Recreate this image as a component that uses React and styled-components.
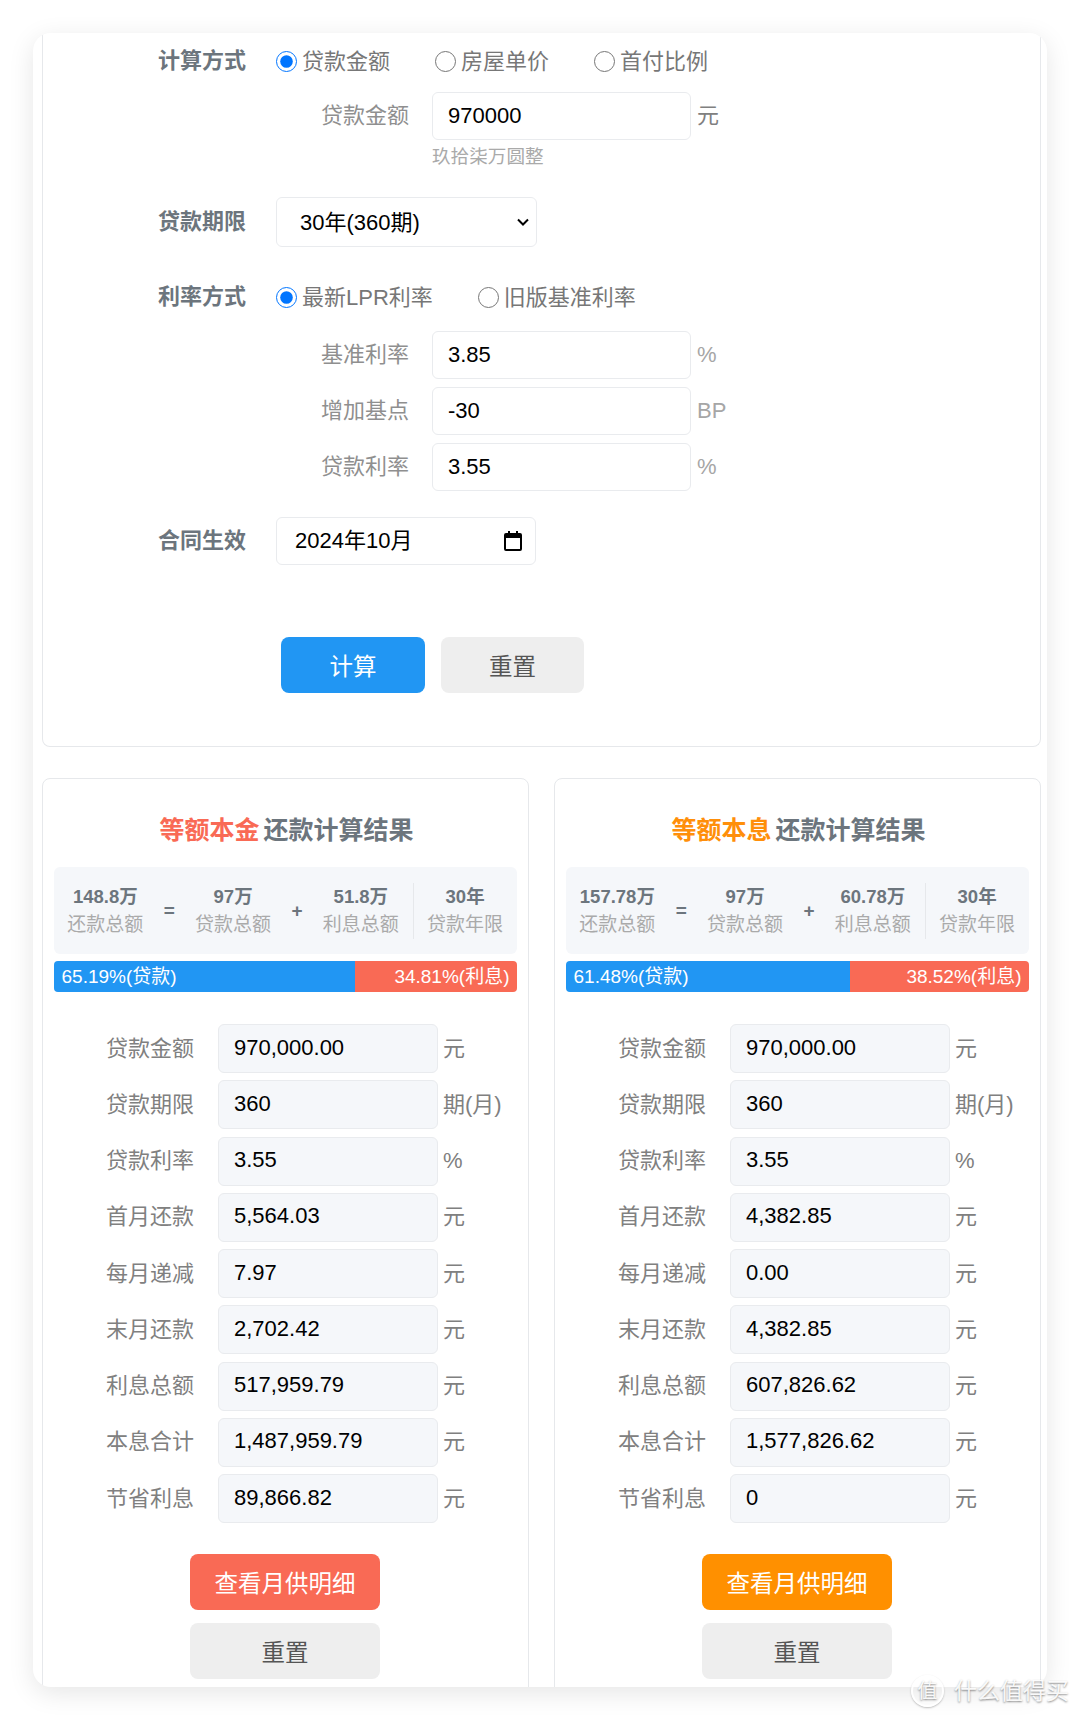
import React from 'react';
import styled, { createGlobalStyle } from 'styled-components';

const FONT = `"Liberation Sans", "Noto Sans CJK SC", sans-serif`;

const CHEVRON = `url("data:image/svg+xml,%3Csvg xmlns='http://www.w3.org/2000/svg' width='14' height='10' viewBox='0 0 14 10'%3E%3Cpath d='M2 2.5l5 5 5-5' fill='none' stroke='%23000' stroke-width='2'/%3E%3C/svg%3E")`;

const RESULTS = [
    {
        name: '等额本金',
        accent: '#f96a55',
        button: '#f96a55',
        total: '148.8万',
        interest: '51.8万',
        loanPct: 65.19,
        loanText: '65.19%(贷款)',
        rateText: '34.81%(利息)',
        rows: [
            ['贷款金额', '970,000.00', '元'],
            ['贷款期限', '360', '期(月)'],
            ['贷款利率', '3.55', '%'],
            ['首月还款', '5,564.03', '元'],
            ['每月递减', '7.97', '元'],
            ['末月还款', '2,702.42', '元'],
            ['利息总额', '517,959.79', '元'],
            ['本息合计', '1,487,959.79', '元'],
            ['节省利息', '89,866.82', '元'],
        ],
    },
    {
        name: '等额本息',
        accent: '#ff8f0a',
        button: '#ff9000',
        total: '157.78万',
        interest: '60.78万',
        loanPct: 61.48,
        loanText: '61.48%(贷款)',
        rateText: '38.52%(利息)',
        rows: [
            ['贷款金额', '970,000.00', '元'],
            ['贷款期限', '360', '期(月)'],
            ['贷款利率', '3.55', '%'],
            ['首月还款', '4,382.85', '元'],
            ['每月递减', '0.00', '元'],
            ['末月还款', '4,382.85', '元'],
            ['利息总额', '607,826.62', '元'],
            ['本息合计', '1,577,826.62', '元'],
            ['节省利息', '0', '元'],
        ],
    },
];

function Radio({ name, label, checked }) {
    return (
        <RadioLabel>
            <RadioInput type="radio" name={name} defaultChecked={checked} />
            <RadioText>{label}</RadioText>
        </RadioLabel>
    );
}

function FormField({ label, value, unit, muted }) {
    return (
        <SubRow>
            <SubLabel>{label}</SubLabel>
            <TextField type="text" defaultValue={value} />
            <Unit $muted={muted}>{unit}</Unit>
        </SubRow>
    );
}

function ResultCard({ data }) {
    return (
        <Card>
            <CardTitle>
                <Accent $color={data.accent}>{data.name}</Accent> 还款计算结果
            </CardTitle>
            <Summary>
                <SummaryItem><b>{data.total}</b><span>还款总额</span></SummaryItem>
                <Operator>=</Operator>
                <SummaryItem><b>97万</b><span>贷款总额</span></SummaryItem>
                <Operator>+</Operator>
                <SummaryItem><b>{data.interest}</b><span>利息总额</span></SummaryItem>
                <SummaryItem $divided><b>30年</b><span>贷款年限</span></SummaryItem>
            </Summary>
            <Progress>
                <LoanPart style={{ width: `${data.loanPct}%` }}>{data.loanText}</LoanPart>
                <RatePart>{data.rateText}</RatePart>
            </Progress>
            <ResultRows>
                {data.rows.map(([label, value, unit]) => (
                    <ResultRow key={label}>
                        <ResultLabel>{label}</ResultLabel>
                        <ResultValue type="text" readOnly defaultValue={value} />
                        <ResultUnit>{unit}</ResultUnit>
                    </ResultRow>
                ))}
            </ResultRows>
            <CardButtons>
                <Button $bg={data.button} $fg="#fff" $w="190px">查看月供明细</Button>
                <Button $bg="#eeeeee" $fg="#555" $w="190px">重置</Button>
            </CardButtons>
        </Card>
    );
}

export default function App() {
    return (
        <>
            <GlobalStyle />
            <Frame>
                <TopCard>
                    <MainRow>
                        <MainLabel>计算方式</MainLabel>
                        <Radios>
                            <Radio name="mode" label="贷款金额" checked />
                            <Radio name="mode" label="房屋单价" />
                            <Radio name="mode" label="首付比例" />
                        </Radios>
                    </MainRow>
                    <SubRows $top="15px">
                        <FormField label="贷款金额" value="970000" unit="元" />
                    </SubRows>
                    <Hint>玖拾柒万圆整</Hint>

                    <MainRow $top="29px">
                        <MainLabel>贷款期限</MainLabel>
                        <PeriodSelect defaultValue="360">
                            <option value="360">30年(360期)</option>
                        </PeriodSelect>
                    </MainRow>

                    <MainRow $top="34px">
                        <MainLabel>利率方式</MainLabel>
                        <Radios>
                            <Radio name="rate" label="最新LPR利率" checked />
                            <Radio name="rate" label="旧版基准利率" />
                        </Radios>
                    </MainRow>
                    <SubRows $top="18px">
                        <FormField label="基准利率" value="3.85" unit="%" muted />
                        <FormField label="增加基点" value="-30" unit="BP" muted />
                        <FormField label="贷款利率" value="3.55" unit="%" muted />
                    </SubRows>

                    <MainRow $top="26px">
                        <MainLabel>合同生效</MainLabel>
                        <DateField>
                            2024年10月
                            <svg width="18" height="20" viewBox="0 0 18 20">
                                <path d="M4 0h2v2h6V0h2v2h2a2 2 0 0 1 2 2v14a2 2 0 0 1-2 2H2a2 2 0 0 1-2-2V4a2 2 0 0 1 2-2h2V0zM2 7v11h14V7H2z" fill="#000" />
                            </svg>
                        </DateField>
                    </MainRow>

                    <TopButtons>
                        <Button $bg="#2196f3" $fg="#fff" $w="144px">计算</Button>
                        <Button $bg="#eeeeee" $fg="#555" $w="143px">重置</Button>
                    </TopButtons>
                </TopCard>

                <CardGrid>
                    {RESULTS.map((r) => <ResultCard key={r.name} data={r} />)}
                </CardGrid>
            </Frame>
            <Watermark>
                <WatermarkBadge>值</WatermarkBadge>
                什么值得买
            </Watermark>
        </>
    );
}

const GlobalStyle = createGlobalStyle`
    html, body {
        margin: 0;
        background: #fff;
        font-family: ${FONT};
    }
    body {
        width: 1080px;
        height: 1720px;
        overflow: hidden;
        position: relative;
    }
    * { box-sizing: border-box; }
`;

const Frame = styled.div`
    margin: 33px 0 0 33px;
    width: 1014px;
    height: 1654px;
    padding: 0 6px 0 9px;
    overflow: hidden;
    background: #fff;
    border-radius: 18px;
    box-shadow: 0 6px 26px rgba(0, 0, 0, 0.1);
`;

const TopCard = styled.section`
    border: 1px solid #e6e8eb;
    border-top: 0;
    border-radius: 0 0 8px 8px;
    height: 714px;
    padding: 12px 0 0 115px;
`;

const MainRow = styled.div`
    display: flex;
    align-items: center;
    gap: 30px;
    margin-top: ${(p) => p.$top || '0'};
`;

const MainLabel = styled.div`
    width: 88px;
    font-size: 22px;
    font-weight: 700;
    line-height: 32px;
    color: #6c757d;
`;

const Radios = styled.div`
    display: flex;
    gap: 45px;
`;

const RadioLabel = styled.label`
    display: flex;
    align-items: center;
    gap: 5px;
    font-size: 22px;
    color: #777;
`;

const RadioInput = styled.input`
    width: 21px;
    height: 21px;
    margin: 0;
`;

const RadioText = styled.span`
    padding-top: 2px;
    line-height: 30px;
`;

const SubRows = styled.div`
    display: flex;
    flex-direction: column;
    gap: 8px;
    margin: ${(p) => p.$top} 0 0 118px;
`;

const SubRow = styled.div`
    display: flex;
    align-items: center;
`;

const SubLabel = styled.div`
    width: 133px;
    margin-right: 23px;
    font-size: 22px;
    line-height: 32px;
    text-align: right;
    color: #8f8f8f;
`;

const TextField = styled.input`
    width: 259px;
    height: 48px;
    padding: 0 15px;
    border: 1px solid #e9ebee;
    border-radius: 6px;
    background: #fff;
    font: 22px ${FONT};
    color: #000;
    outline: none;
`;

const Unit = styled.span`
    margin-left: 6px;
    font-size: 22px;
    line-height: 32px;
    color: ${(p) => (p.$muted ? '#a6a6a6' : '#808080')};
`;

const Hint = styled.div`
    margin: 6px 0 0 274px;
    font-size: 18.6px;
    line-height: 22px;
    color: #aaa;
`;

const PeriodSelect = styled.select`
    width: 261px;
    height: 50px;
    padding: 0 23px;
    border: 1px solid #e9ebee;
    border-radius: 6px;
    appearance: none;
    background: #fff ${CHEVRON} no-repeat right 6px center;
    font: 22px ${FONT};
    color: #000;
    outline: none;
`;

const DateField = styled.div`
    display: flex;
    align-items: center;
    justify-content: space-between;
    width: 260px;
    height: 48px;
    padding: 0 13px 0 18px;
    border: 1px solid #e9ebee;
    border-radius: 6px;
    font-size: 22px;
    line-height: 32px;
    color: #000;
`;

const TopButtons = styled.div`
    display: flex;
    gap: 16px;
    margin: 72px 0 0 123px;
`;

const Button = styled.button`
    width: ${(p) => p.$w};
    height: 56px;
    padding: 3px 0 0;
    border: 0;
    border-radius: 8px;
    background: ${(p) => p.$bg};
    color: ${(p) => p.$fg};
    font: 23.5px/32px ${FONT};
`;

const CardGrid = styled.div`
    display: flex;
    gap: 25px;
    margin-top: 31px;
`;

const Card = styled.section`
    flex: 1;
    height: 920px;
    padding: 0 11.5px 0 10.5px;
    border: 1px solid #e6e8eb;
    border-radius: 8px;
`;

const CardTitle = styled.h2`
    margin: 0;
    padding: 35px 0 0 3px;
    height: 88px;
    font-size: 25px;
    font-weight: 700;
    line-height: 32px;
    word-spacing: -3px;
    text-align: center;
    color: #6c757d;
`;

const Accent = styled.span`
    color: ${(p) => p.$color};
`;

const Summary = styled.div`
    display: grid;
    grid-template-columns: 1fr 24px 1fr 24px 1fr 1fr;
    align-items: center;
    height: 87px;
    background: #f5f7fa;
    border-radius: 6px;
`;

const SummaryItem = styled.div`
    display: flex;
    flex-direction: column;
    align-items: center;
    height: 56px;
    justify-content: center;
    border-left: ${(p) => (p.$divided ? '1px solid #e6e8eb' : '0')};
    white-space: nowrap;

    b {
        font-size: 18.5px;
        line-height: 28px;
        color: #6c757d;
    }
    span {
        font-size: 19px;
        line-height: 28px;
        color: #aaa;
    }
`;

const Operator = styled.div`
    font-size: 19px;
    font-weight: 700;
    text-align: center;
    color: #6c757d;
`;

const Progress = styled.div`
    display: flex;
    height: 31px;
    margin-top: 7px;
    border-radius: 4px;
    overflow: hidden;
    font-size: 19px;
    line-height: 31px;
    color: #fff;
`;

const LoanPart = styled.div`
    padding-left: 8px;
    background: #2196f3;
`;

const RatePart = styled.div`
    flex: 1;
    padding-right: 7px;
    background: #f96a55;
    text-align: right;
`;

const ResultRows = styled.div`
    display: flex;
    flex-direction: column;
    gap: 7.25px;
    margin-top: 32px;
`;

const ResultRow = styled.div`
    display: flex;
    align-items: center;
`;

const ResultLabel = styled.div`
    width: 140.5px;
    margin-right: 24px;
    font-size: 22px;
    line-height: 32px;
    text-align: right;
    color: #808080;
`;

const ResultValue = styled.input`
    width: 220px;
    height: 49px;
    padding: 0 15px 2px;
    border: 1px solid #e9ebee;
    border-radius: 6px;
    background: #f5f7fa;
    font: 22px ${FONT};
    color: #000;
    outline: none;
`;

const ResultUnit = styled.span`
    margin-left: 5px;
    font-size: 22px;
    line-height: 32px;
    color: #808080;
    white-space: nowrap;
`;

const CardButtons = styled.div`
    display: flex;
    flex-direction: column;
    align-items: center;
    gap: 13px;
    margin-top: 31px;
`;

const Watermark = styled.div`
    position: absolute;
    right: 11px;
    bottom: 13px;
    display: flex;
    align-items: center;
    gap: 10px;
    font-size: 23px;
    line-height: 32px;
    color: rgba(255, 255, 255, 0.92);
    text-shadow: 0 1px 2px rgba(0, 0, 0, 0.45);
`;

const WatermarkBadge = styled.div`
    width: 33px;
    height: 32px;
    border: 2px solid rgba(255, 255, 255, 0.9);
    border-radius: 50%;
    box-shadow: 0 1px 2px rgba(0, 0, 0, 0.25);
    font-size: 20px;
    line-height: 28px;
    text-align: center;
`;
